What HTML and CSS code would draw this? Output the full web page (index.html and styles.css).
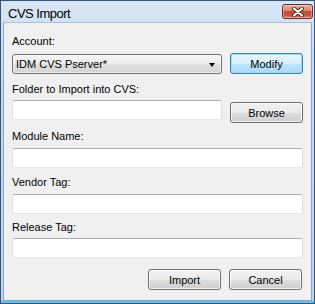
FILE: index.html
```html
<!DOCTYPE html>
<html>
<head>
<meta charset="utf-8">
<link rel="stylesheet" href="styles.css">
</head>
<body>
<div class="window">
  <div class="titlebar">
    <span class="title">CVS Import</span>
    <button class="close" aria-label="Close">
      <svg width="14" height="10" viewBox="0 0 14 10">
        <path d="M3 1.5 L11 8.5 M11 1.5 L3 8.5" stroke="#5a1f18" stroke-width="4" stroke-linecap="round"/>
        <path d="M3 1.5 L11 8.5 M11 1.5 L3 8.5" stroke="#ffffff" stroke-width="2.2" stroke-linecap="round"/>
      </svg>
    </button>
  </div>
  <div class="content">
    <div class="label l1">Account:</div>
    <div class="row r1">
      <div class="combo">
        <span class="combo-text">IDM CVS Pserver*</span>
        <span class="arrow"></span>
      </div>
      <button class="btn default">Modify</button>
    </div>
    <div class="label l2">Folder to Import into CVS:</div>
    <div class="row r2">
      <input class="field" type="text">
      <button class="btn browse">Browse</button>
    </div>
    <div class="label l3">Module Name:</div>
    <input class="field full f3" type="text">
    <div class="label l4">Vendor Tag:</div>
    <input class="field full f4" type="text">
    <div class="label l5">Release Tag:</div>
    <input class="field full f5" type="text">
    <div class="actions">
      <button class="btn">Import</button>
      <button class="btn">Cancel</button>
    </div>
  </div>
</div>
</body>
</html>
```

FILE: styles.css
```css
* { box-sizing: border-box; }
html, body { margin: 0; padding: 0; }
body {
  width: 315px;
  height: 304px;
  overflow: hidden;
  font-family: "Liberation Sans", Arial, sans-serif;
  font-size: 11px;
  color: #000;
}
.window {
  width: 315px;
  height: 304px;
  border: 1px solid #34557d;
  background: linear-gradient(#d8e5f4, #c4d8ee 30%, #bcd3ec);
  padding: 0 2px 2px 2px;
  display: flex;
  flex-direction: column;
  box-shadow: inset 0 -2px 0 #5cc6ea;
}
.titlebar {
  height: 21px;
  flex: none;
  display: flex;
  align-items: flex-start;
  justify-content: space-between;
  padding-left: 5px;
}
.title {
  font-size: 13px;
  line-height: 15px;
  letter-spacing: -0.5px;
  margin-top: 5px;
  color: #000;
}
.close {
  width: 31px;
  height: 15px;
  margin-top: 3px;
  margin-right: -1px;
  padding: 0;
  border: 1px solid #6e2a22;
  border-radius: 3px;
  background: linear-gradient(#eab0a2, #d9826f 45%, #c24a32 50%, #c8553c 80%, #dc8a70);
  display: flex;
  align-items: center;
  justify-content: center;
  box-shadow: inset 0 0 0 1px rgba(255,255,255,0.35);
}
.close svg { display: block; }
.content {
  flex: 1;
  background: #f0f0f0;
  border: 1px solid #8aa6c6;
  border-top-color: #a9c0da;
  padding: 12px 8px 0 8px;
  display: flex;
  flex-direction: column;
}
.content > * { flex: none; }
.label {
  height: 13px;
  line-height: 13px;
  white-space: nowrap;
}
.row {
  display: flex;
  gap: 8px;
  align-items: flex-start;
}
.combo {
  flex: 1;
  height: 20px;
  margin-top: 1px;
  border: 1px solid #707070;
  border-radius: 3px;
  background: linear-gradient(#f4f4f4 0%, #ececec 50%, #e0e0e0 51%, #d4d4d4 100%);
  display: flex;
  align-items: center;
  padding: 0 6px 0 3px;
  box-shadow: inset 0 0 0 1px rgba(255,255,255,0.6);
}
.combo-text { flex: 1; }
.arrow {
  width: 0;
  height: 0;
  border-left: 3.5px solid transparent;
  border-right: 3.5px solid transparent;
  border-top: 4px solid #000;
  margin-top: 1px;
}
.btn {
  width: 73px;
  height: 21px;
  padding: 0;
  font-family: inherit;
  font-size: 11px;
  color: #000;
  border: 1px solid #707070;
  border-radius: 3px;
  background: linear-gradient(#f2f2f2 0%, #ebebeb 50%, #dddddd 51%, #cfcfcf 100%);
  box-shadow: inset 0 0 0 1px rgba(255,255,255,0.7);
  flex: none;
}
.btn.default {
  border-color: #3c7fb1;
  background: linear-gradient(#eaf6fd 0%, #d9f0fc 50%, #bee6fd 51%, #a7d9f5 100%);
  box-shadow: inset 0 0 0 1px #8fe0f8;
}
.field {
  display: block;
  height: 20px;
  margin: 0;
  padding: 0 3px;
  font-family: inherit;
  font-size: 11px;
  background: #fff;
  border: 1px solid #dbdfe6;
  border-top-color: #abadb3;
  border-bottom-color: #e3e9ef;
  border-radius: 2px;
  outline: none;
}
.row .field { flex: 1; min-width: 0; }
.full { width: 100%; }
.actions {
  display: flex;
  justify-content: flex-end;
  gap: 8px;
  padding-right: 1px;
}

/* vertical rhythm */
.r1 { margin-top: 5px; height: 21px; }
.l2 { margin-top: 9px; }
.r2 { margin-top: 4px; height: 23px; }
.browse { margin-top: 2px; }
.l3 { margin-top: 7px; }
.field.f3 { margin-top: 5px; }
.l4 { margin-top: 8px; }
.field.f4 { margin-top: 5px; }
.l5 { margin-top: 7px; }
.field.f5 { margin-top: 4px; }
.actions { margin-top: 11px; }
```
